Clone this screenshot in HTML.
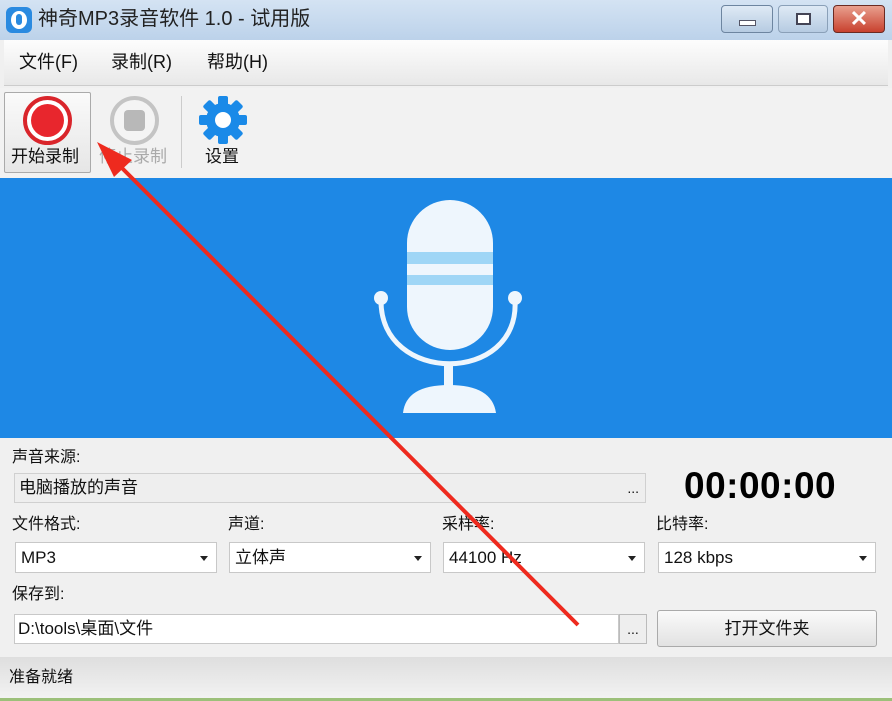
<!DOCTYPE html><html><head><meta charset="utf-8"><style>
*{box-sizing:border-box;margin:0;padding:0}
body{width:892px;height:701px;overflow:hidden;background:#f0f0f0;font-family:"Liberation Sans","Noto Sans CJK SC",sans-serif;font-size:16px;color:#111;position:relative}
.a{position:absolute;line-height:1.15}
.title{left:0;top:0;width:892px;height:40px;background:linear-gradient(#d4e3f3,#bcd2ea);}
.menu{left:4px;top:40px;width:884px;height:46px;background:linear-gradient(#fdfdfd,#e8e8e8);border-bottom:1px solid #ccc}
.tb{left:0;top:88px;width:892px;height:90px;background:#f2f2f2}
.blue{left:0;top:178px;width:892px;height:260px;background:#1e88e5}
.box{background:#fff;border:1px solid #c8c8c8}
.dd{font-size:17px;padding:5px 0 0 5px;height:31px;line-height:20px}
.dd:after{content:"";position:absolute;right:8px;top:13px;border:4px solid transparent;border-top:5px solid #222}
.lbl{font-size:16px}
</style></head><body>
<div class="a title"></div>
<div class="a" style="left:6px;top:7px;width:26px;height:26px;border-radius:6px;background:#2a8ae0"><div class="a" style="left:5px;top:4px;width:16px;height:18px;border-radius:50%;background:#fff"></div><div class="a" style="left:10px;top:7px;width:6px;height:11px;border-radius:3px;background:#2a8ae0"></div></div>
<div class="a" style="left:38px;top:8px;font-size:20px;color:#222">神奇MP3录音软件 1.0 - 试用版</div>
<div class="a" style="left:721px;top:5px;width:52px;height:28px;border:1px solid #6d85a0;border-radius:4px;background:linear-gradient(#dfeaf5,#b6cbe2)"><div class="a" style="left:17px;top:14px;width:17px;height:6px;background:#fff;border:1px solid #556"></div></div>
<div class="a" style="left:778px;top:5px;width:50px;height:28px;border:1px solid #8aa0b8;border-radius:4px;background:linear-gradient(#dfeaf5,#b6cbe2)"><div class="a" style="left:17px;top:7px;width:15px;height:12px;border:2px solid #445;background:#fff"></div></div>
<div class="a" style="left:833px;top:5px;width:52px;height:28px;border:1px solid #6b2a22;border-radius:4px;background:linear-gradient(#e9a08f,#c8412e);color:#fff;font-weight:bold;font-size:22px;text-align:center;line-height:26px">✕</div>
<div class="a menu"></div>
<div class="a" style="left:19px;top:52px;font-size:18px">文件(F)</div>
<div class="a" style="left:111px;top:52px;font-size:18px">录制(R)</div>
<div class="a" style="left:207px;top:52px;font-size:18px">帮助(H)</div>
<div class="a tb"></div>
<div class="a" style="left:4px;top:92px;width:87px;height:81px;border:1px solid #aaa;border-radius:2px;background:linear-gradient(#fafafa,#e6e6e6)"></div>
<div class="a" style="left:23px;top:96px;width:49px;height:49px;border-radius:50%;border:4px solid #d9252b;background:#fff"><div class="a" style="left:4px;top:4px;width:33px;height:33px;border-radius:50%;background:#e8262d"></div></div>
<div class="a" style="left:11px;top:147px;font-size:17px">开始录制</div>
<div class="a" style="left:110px;top:96px;width:49px;height:49px;border-radius:50%;border:4px solid #c4c4c4;background:#f4f4f4"><div class="a" style="left:10px;top:10px;width:21px;height:21px;border-radius:4px;background:#b8b8b8"></div></div>
<div class="a" style="left:99px;top:147px;font-size:17px;color:#aaa">停止录制</div>
<div class="a" style="left:181px;top:96px;width:1px;height:72px;background:#ccc"></div>
<svg class="a" style="left:198px;top:95px" width="50" height="50" viewBox="0 0 50 50"><g fill="#1a8ae8"><circle cx="25" cy="25" r="17"/><g id="t"><rect x="20" y="1" width="10" height="11" rx="2"/><rect x="20" y="38" width="10" height="11" rx="2"/></g><use href="#t" transform="rotate(45 25 25)"/><use href="#t" transform="rotate(90 25 25)"/><use href="#t" transform="rotate(135 25 25)"/></g><circle cx="25" cy="25" r="8" fill="#fff"/></svg>
<div class="a" style="left:205px;top:147px;font-size:17px">设置</div>
<div class="a blue"></div>
<svg class="a" style="left:370px;top:195px" width="160" height="225" viewBox="0 0 160 225">
<rect x="37" y="5" width="86" height="150" rx="43" fill="#eef6fd"/>
<rect x="37" y="57" width="86" height="12" fill="#9fd6f6"/><rect x="37" y="80" width="86" height="10" fill="#9fd6f6"/>
<path d="M11 105 C 10 190, 150 190, 145 105" fill="none" stroke="#eef6fd" stroke-width="5"/>
<circle cx="11" cy="103" r="7" fill="#eef6fd"/><circle cx="145" cy="103" r="7" fill="#eef6fd"/>
<rect x="74" y="170" width="9" height="25" fill="#eef6fd"/>
<path d="M33 218 Q 36 190 79 190 Q 122 190 126 218 Z" fill="#eef6fd"/>
</svg>
<div class="a lbl" style="left:12px;top:449px">声音来源:</div>
<div class="a" style="left:14px;top:473px;width:632px;height:30px;border:1px solid #d0d0d0;background:#eeeeee;font-size:17px;padding:4px 0 0 4px">电脑播放的声音<span class="a" style="right:6px;top:6px;font-size:14px">...</span></div>
<div class="a" style="left:684px;top:465px;font-size:37px;font-weight:bold;color:#000;letter-spacing:0.5px">00:00:00</div>
<div class="a lbl" style="left:12px;top:516px">文件格式:</div>
<div class="a lbl" style="left:228px;top:516px">声道:</div>
<div class="a lbl" style="left:442px;top:516px">采样率:</div>
<div class="a lbl" style="left:656px;top:516px">比特率:</div>
<div class="a box dd" style="left:15px;top:542px;width:202px">MP3</div>
<div class="a box dd" style="left:229px;top:542px;width:202px">立体声</div>
<div class="a box dd" style="left:443px;top:542px;width:202px">44100 Hz</div>
<div class="a box dd" style="left:658px;top:542px;width:218px">128 kbps</div>
<div class="a lbl" style="left:12px;top:586px">保存到:</div>
<div class="a box" style="left:14px;top:614px;width:605px;height:30px;font-size:17px;padding:4px 0 0 3px">D:\tools\桌面\文件</div>
<div class="a" style="left:619px;top:614px;width:28px;height:30px;border:1px solid #bbb;background:#eee;font-size:14px;text-align:center;line-height:28px">...</div>
<div class="a" style="left:657px;top:610px;width:220px;height:37px;border:1px solid #aaa;border-radius:3px;background:linear-gradient(#fafafa,#e2e2e2);font-size:17px;text-align:center;line-height:35px">打开文件夹</div>
<div class="a" style="left:0;top:657px;width:892px;height:41px;background:linear-gradient(#dedede,#f2f2f2);font-size:16px;padding:12px 0 0 9px">准备就绪</div>
<div class="a" style="left:0;top:698px;width:892px;height:3px;background:#9cc07a"></div>
<svg class="a" style="left:0;top:0" width="892" height="701"><line x1="578" y1="625" x2="112" y2="158" stroke="#ee2a1e" stroke-width="4"/><polygon points="97,142 132,160 114,177" fill="#ee2a1e"/></svg>
</body></html>
